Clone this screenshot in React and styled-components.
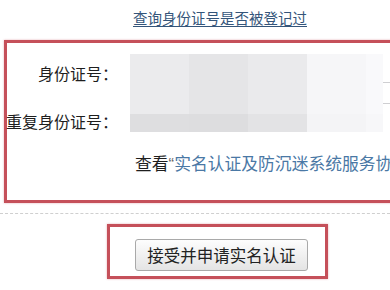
import React from 'react'
import styled, { createGlobalStyle } from 'styled-components'

const GlobalStyle = createGlobalStyle`
  html, body {
    margin: 0;
    padding: 0;
    background: #fff;
    overflow: hidden;
  }
  body {
    font-family: "Noto Sans CJK SC", "Noto Sans", sans-serif;
    color: #222;
  }
`;

const Page = styled.div`
  width: 390px;
  height: 290px;
  overflow: hidden;
`;

const TopRow = styled.div`
  height: 40px;
  padding-left: 133px;
  box-sizing: border-box;
  padding-top: 5px;
`;

const QueryLink = styled.a`
  font-size: 14.5px;
  line-height: 22px;
  color: #34557a;
  text-decoration: underline;
  text-underline-offset: 2px;
  white-space: nowrap;
  cursor: pointer;
`;

const Panel = styled.div`
  margin-left: 4px;
  width: 460px;
  border: 3px solid #c5505a;
  border-right: none;
  box-shadow: 0 0 2px rgba(200, 80, 90, 0.45);
  padding: 11px 0 23px 0;
`;

const Form = styled.div`
  display: flex;
  align-items: flex-start;
`;

const Labels = styled.div`
  width: 111px;
  display: flex;
  flex-direction: column;
  gap: 24px;
  padding-top: 7px;
`;

const Label = styled.div`
  font-size: 16px;
  line-height: 24px;
  text-align: right;
  white-space: nowrap;
  color: #1e1e1e;
  margin-left: -8px;
`;

const Mosaic = styled.div`
  margin-left: 12px;
  display: grid;
  grid-template-columns: 59px 59px 59px 59px 17px;
  grid-template-rows: 60px 18px;
`;

const Tile = styled.div`
  background: ${({ $c }) => $c};
`;

const InputEdge = styled.div`
  margin-top: 28px;
  width: 20px;
  height: 20px;
  border-top: 1px solid #cfcfd2;
  border-bottom: 1px solid #cfcfd2;
`;

const Agreement = styled.div`
  margin-top: 18px;
  padding-left: 128px;
  font-size: 16.8px;
  line-height: 24px;
  white-space: nowrap;
  color: #1e1e1e;
`;

const Quote = styled.span`
  font-family: "Liberation Sans", sans-serif;
  color: #666;
`;

const AgreementLink = styled.a`
  color: #4a78a5;
  cursor: pointer;
`;

const Divider = styled.div`
  margin-top: 10px;
  border-top: 1px dashed #cfcfcf;
`;

const ButtonFrame = styled.div`
  box-sizing: border-box;
  margin: 10px 0 0 107px;
  width: 221px;
  border: 3px solid #c5505a;
  box-shadow: 0 0 2px rgba(200, 80, 90, 0.45);
  padding: 12px 0 5px 25px;
`;

const SubmitButton = styled.button`
  display: block;
  width: 173px;
  height: 32px;
  padding: 0;
  font-family: "Noto Sans CJK SC", "Noto Sans", sans-serif;
  font-size: 16.5px;
  color: #222;
  background: linear-gradient(#fdfdfd, #e4e4e4);
  border: 1px solid #a9a9a9;
  border-radius: 3px;
  cursor: pointer;
`;

const tiles = [
  '#ebebed', '#e5e5e7', '#eaeaec', '#f6f6f8', '#f9f9fb',
  '#dedee0', '#dddddf', '#e3e3e5', '#f4f4f6', '#f7f7f9',
];

export default function App() {
  return (
    <Page>
      <GlobalStyle />
      <TopRow>
        <QueryLink>查询身份证号是否被登记过</QueryLink>
      </TopRow>
      <Panel>
        <Form>
          <Labels>
            <Label>身份证号：</Label>
            <Label>重复身份证号：</Label>
          </Labels>
          <Mosaic>
            {tiles.map((c, i) => (
              <Tile key={i} $c={c} />
            ))}
          </Mosaic>
          <InputEdge />
        </Form>
        <Agreement>
          查看<Quote>“</Quote><AgreementLink>实名认证及防沉迷系统服务协议”</AgreementLink>
        </Agreement>
      </Panel>
      <Divider />
      <ButtonFrame>
        <SubmitButton>接受并申请实名认证</SubmitButton>
      </ButtonFrame>
    </Page>
  )
}
